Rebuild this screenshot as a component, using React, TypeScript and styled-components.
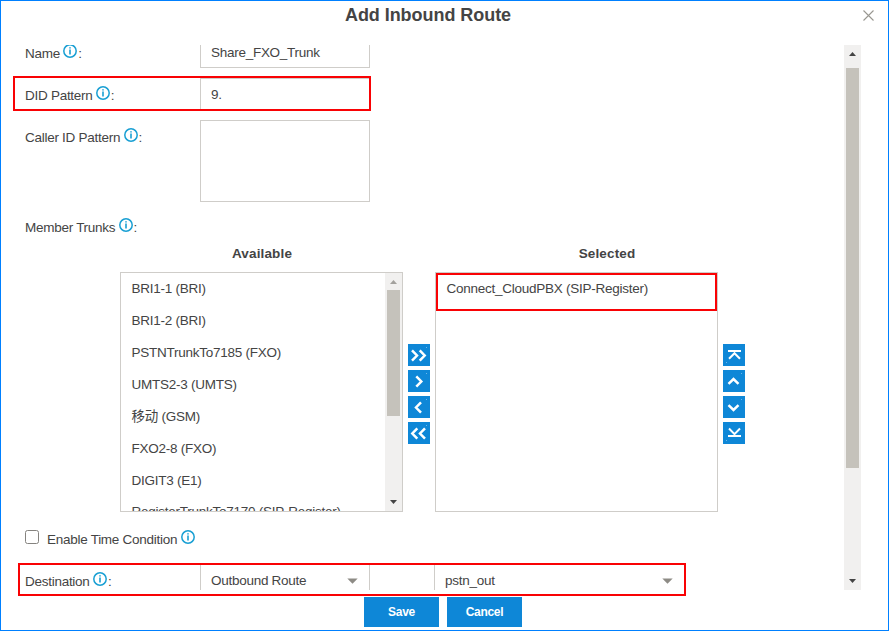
import React from 'react';
import styled, { createGlobalStyle } from 'styled-components';

const GlobalStyle = createGlobalStyle`
  *, *::before, *::after { box-sizing: border-box; }
  body {
    margin: 0;
    background: #fff;
    color: #444;
    font: 13.5px/18px "Liberation Sans", Arial, "Noto Sans CJK SC", sans-serif;
    letter-spacing: -0.27px;
  }
`;

const Dialog = styled.div`
  position: relative;
  display: flex;
  flex-direction: column;
  width: 889px;
  height: 631px;
  border: 1px solid #0080ff;
  background: #fff;
  overflow: hidden;
`;

const Header = styled.header`
  display: flex;
  flex: none;
  height: 44px;
  padding: 3px 13px 0 0;
`;

const Title = styled.h1`
  flex: 1;
  margin: 0;
  padding-right: 7px;
  text-align: center;
  font-size: 18px;
  line-height: 22px;
  letter-spacing: -0.05px;
`;

const CloseButton = styled.button`
  width: 13px;
  height: 13px;
  margin-top: 5px;
  padding: 0;
  border: 0;
  background: none;
  svg { display: block; }
`;

const Body = styled.div`
  display: flex;
  flex: none;
  height: 545px;
  padding: 0 27px 0 24px;
  overflow: hidden;
`;

const Form = styled.form`
  flex: 1;
  margin-top: -9px;
`;

const Row = styled.div<{ $height: number }>`
  display: flex;
  height: ${(p) => p.$height}px;
`;

const Label = styled.label<{ $auto?: boolean }>`
  display: flex;
  flex: none;
  width: ${(p) => (p.$auto ? 'auto' : '175px')};
  height: 18px;
  margin-top: 9px;
  white-space: nowrap;
`;

const InfoSvg = styled.svg`
  flex: none;
  margin: -1px 0.8px 0 3.5px;
`;

const Field = styled.div<{ $width?: number }>`
  display: flex;
  align-items: center;
  justify-content: space-between;
  width: ${(p) => p.$width ?? 170}px;
  height: 32px;
  padding: 1px 11px 0 10px;
  border: 1px solid #cfcdc9;
`;

const TextArea = styled.div`
  width: 170px;
  height: 82px;
  border: 1px solid #cfcdc9;
`;

const Transfer = styled.div`
  display: flex;
  align-items: flex-start;
  height: 278px;
  margin-left: 95px;
`;

const Column = styled.section`
  width: 283px;
`;

const ColumnTitle = styled.h2<{ $indent?: number }>`
  height: 27px;
  margin: 1px 0 0;
  padding-left: ${(p) => p.$indent ?? 1}px;
  text-align: center;
  font-size: 13.5px;
  line-height: 18px;
  letter-spacing: 0.15px;
`;

const ListBox = styled.div`
  display: flex;
  justify-content: space-between;
  height: 240px;
  border: 1px solid #cfcdc9;
  overflow: hidden;
`;

const List = styled.ul`
  margin: 0;
  padding: 0 0 0 10.5px;
  list-style: none;
`;

const Item = styled.li`
  height: 32px;
  line-height: 31px;
  letter-spacing: -0.25px;
  white-space: nowrap;
  &:nth-child(8) { line-height: 29px; }
`;

const Track = styled.div`
  display: flex;
  flex: none;
  flex-direction: column;
  align-items: center;
  width: 17px;
  background: #f1f0ef;
`;

const Thumb = styled.div<{ $height: number; $gap: number }>`
  width: 13px;
  height: ${(p) => p.$height}px;
  margin-top: ${(p) => p.$gap}px;
  margin-bottom: auto;
  background: #c5c2bb;
`;

const TrackArrow = styled.svg<{ $top?: number; $bottom?: number }>`
  flex: none;
  margin: ${(p) => p.$top ?? 0}px 0 ${(p) => p.$bottom ?? 0}px;
`;

const ButtonStack = styled.div`
  display: flex;
  flex-direction: column;
  gap: 4px;
  margin: 100px 5px 0;
`;

const MoveButton = styled.button`
  width: 22px;
  height: 22px;
  padding: 0;
  border: 0;
  background: #0e87d7;
  svg { display: block; }
`;

const CheckBox = styled.span`
  width: 14px;
  height: 14px;
  margin: 8px 8px 0 0;
  border: 1px solid #85837f;
  border-radius: 2.5px;
`;

const Gap = styled.div`
  width: 64px;
`;

const Footer = styled.footer`
  display: flex;
  justify-content: center;
  gap: 8px;
  padding: 7px 3px 0 0;
`;

const ActionButton = styled.button`
  width: 75px;
  height: 30px;
  padding: 0;
  border: 0;
  background: #0e87d7;
  color: #fff;
  font: bold 12px/30px "Liberation Sans", Arial, sans-serif;
  letter-spacing: -0.3px;
`;

const Highlight = styled.div<{ $x: number; $y: number; $w: number; $h: number }>`
  position: absolute;
  left: ${(p) => p.$x}px;
  top: ${(p) => p.$y}px;
  width: ${(p) => p.$w}px;
  height: ${(p) => p.$h}px;
  border: 2px solid #f90204;
  pointer-events: none;
`;

const Info = () => (
  <InfoSvg width="14" height="14" viewBox="0 0 14 14">
    <circle cx="7" cy="7" r="6.2" fill="none" stroke="#189fd3" strokeWidth="1.5" />
    <path d="M7 3.2v1.3M7 5.5v5" stroke="#189fd3" strokeWidth="1.6" />
  </InfoSvg>
);

const Caret = () => (
  <svg width="11" height="6" viewBox="0 0 11 6">
    <path d="M.3.5h10.4L5.5 5.7z" fill="#8d8b85" />
  </svg>
);

const UP = 'M0 4L3.5 0L7 4z';
const DOWN = 'M0 0H7L3.5 4z';

const Scrollbar = ({ thumb, gap, top, bottom, dim }: { thumb: number; gap: number; top: number; bottom: number; dim?: boolean }) => (
  <Track>
    <TrackArrow width="7" height="4" $top={top}><path d={UP} fill={dim ? '#a3a19d' : '#444'} /></TrackArrow>
    <Thumb $height={thumb} $gap={gap} />
    <TrackArrow width="7" height="4" $bottom={bottom}><path d={DOWN} fill="#444" /></TrackArrow>
  </Track>
);

const Move = ({ d, label, bar }: { d: string; label: string; bar?: string }) => (
  <MoveButton type="button" aria-label={label}>
    <svg width="22" height="22" viewBox="0 0 22 22" fill="none" stroke="#fff">
      <path d={d} strokeWidth={bar ? 2 : 2.5} />
      {bar && <path d={bar} strokeWidth="2" />}
      <path d={bar ? 'M3 18.5h1' : 'M18 3.5h1'} stroke="#6ab8ea" />
    </svg>
  </MoveButton>
);

const trunks = [
  'BRI1-1 (BRI)',
  'BRI1-2 (BRI)',
  'PSTNTrunkTo7185 (FXO)',
  'UMTS2-3 (UMTS)',
  '移动 (GSM)',
  'FXO2-8 (FXO)',
  'DIGIT3 (E1)',
  'RegisterTrunkTo7170 (SIP-Register)',
];

export default function App() {
  return (
    <>
      <GlobalStyle />
      <Dialog>
        <Header>
          <Title>Add Inbound Route</Title>
          <CloseButton aria-label="Close">
            <svg width="13" height="13" viewBox="0 0 13 13">
              <path d="M1.5 1.5l10 10M11.5 1.5l-10 10" stroke="#999791" strokeWidth="1.1" />
            </svg>
          </CloseButton>
        </Header>
        <Body>
          <Form>
            <Row $height={42}>
              <Label>Name<Info />:</Label>
              <Field>Share_FXO_Trunk</Field>
            </Row>
            <Row $height={42}>
              <Label>DID Pattern<Info />:</Label>
              <Field>9.</Field>
            </Row>
            <Row $height={90}>
              <Label>Caller ID Pattern<Info />:</Label>
              <TextArea />
            </Row>
            <Row $height={34}>
              <Label>Member Trunks<Info />:</Label>
            </Row>
            <Transfer>
              <Column>
                <ColumnTitle>Available</ColumnTitle>
                <ListBox>
                  <List>
                    {trunks.map((name) => <Item key={name}>{name}</Item>)}
                  </List>
                  <Scrollbar thumb={126} gap={6} top={7} bottom={7} dim />
                </ListBox>
              </Column>
              <ButtonStack>
                <Move label="Add all" d="M4 6.3l5 5.2L4 16.7M11.7 6.3l5 5.2L11.7 16.7" />
                <Move label="Add" d="M8.3 6.3l5 5.2L8.3 16.7" />
                <Move label="Remove" d="M13 6.3L8 11.5L13 16.7" />
                <Move label="Remove all" d="M9.3 6.3L4.3 11.5L9.3 16.7M17 6.3L12 11.5L17 16.7" />
              </ButtonStack>
              <Column>
                <ColumnTitle $indent={61}>Selected</ColumnTitle>
                <ListBox>
                  <List><Item>Connect_CloudPBX (SIP-Register)</Item></List>
                </ListBox>
              </Column>
              <ButtonStack>
                <Move label="Move to top" d="M6 14.8l5.5-5.6l5.5 5.6" bar="M5 7h13" />
                <Move label="Move up" d="M5.5 13.8l5-4.8l5 4.8" />
                <Move label="Move down" d="M5.5 9.2l5 4.8l5-4.8" />
                <Move label="Move to bottom" d="M6 6.5l5.5 5.6l5.5-5.6" bar="M5 14h13" />
              </ButtonStack>
            </Transfer>
            <Row $height={42}>
              <CheckBox />
              <Label $auto>Enable Time Condition<Info /></Label>
            </Row>
            <Row $height={32}>
              <Label>Destination<Info />:</Label>
              <Field>Outbound Route<Caret /></Field>
              <Gap />
              <Field $width={251}>pstn_out<Caret /></Field>
            </Row>
          </Form>
          <Scrollbar thumb={400} gap={12} top={7} bottom={7} />
        </Body>
        <Footer>
          <ActionButton>Save</ActionButton>
          <ActionButton>Cancel</ActionButton>
        </Footer>
        <Highlight $x={12} $y={75} $w={358} $h={35} />
        <Highlight $x={435} $y={272} $w={281} $h={38} />
        <Highlight $x={17} $y={562} $w={668} $h={33} />
      </Dialog>
    </>
  );
}
